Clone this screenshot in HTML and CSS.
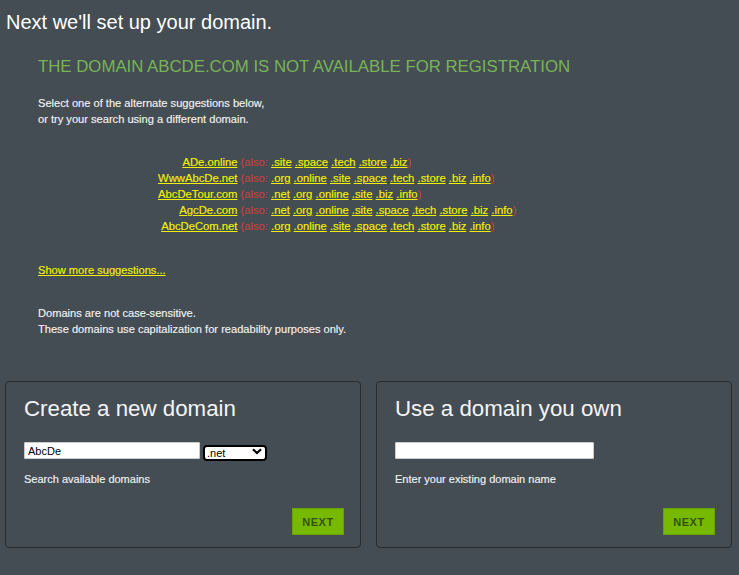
FILE: index.html
```html
<!DOCTYPE html>
<html>
<head>
<meta charset="utf-8">
<link rel="stylesheet" href="styles.css">
</head>
<body>
<h1 class="page-title">Next we'll set up your domain.</h1>
<div class="content">
  <h2 class="notice">THE DOMAIN ABCDE.COM IS NOT AVAILABLE FOR REGISTRATION</h2>
  <p class="info">Select one of the alternate suggestions below,<br>or try your search using a different domain.</p>
  <table class="suggestions">
    <tr><td class="name"><a href="#">ADe.online</a></td><td class="alts"><span class="also">(also:</span> <a href="#">.site</a> <a href="#">.space</a> <a href="#">.tech</a> <a href="#">.store</a> <a href="#">.biz</a><span class="also">)</span></td></tr>
    <tr><td class="name"><a href="#">WwwAbcDe.net</a></td><td class="alts"><span class="also">(also:</span> <a href="#">.org</a> <a href="#">.online</a> <a href="#">.site</a> <a href="#">.space</a> <a href="#">.tech</a> <a href="#">.store</a> <a href="#">.biz</a> <a href="#">.info</a><span class="also">)</span></td></tr>
    <tr><td class="name"><a href="#">AbcDeTour.com</a></td><td class="alts"><span class="also">(also:</span> <a href="#">.net</a> <a href="#">.org</a> <a href="#">.online</a> <a href="#">.site</a> <a href="#">.biz</a> <a href="#">.info</a><span class="also">)</span></td></tr>
    <tr><td class="name"><a href="#">AgcDe.com</a></td><td class="alts"><span class="also">(also:</span> <a href="#">.net</a> <a href="#">.org</a> <a href="#">.online</a> <a href="#">.site</a> <a href="#">.space</a> <a href="#">.tech</a> <a href="#">.store</a> <a href="#">.biz</a> <a href="#">.info</a><span class="also">)</span></td></tr>
    <tr><td class="name"><a href="#">AbcDeCom.net</a></td><td class="alts"><span class="also">(also:</span> <a href="#">.org</a> <a href="#">.online</a> <a href="#">.site</a> <a href="#">.space</a> <a href="#">.tech</a> <a href="#">.store</a> <a href="#">.biz</a> <a href="#">.info</a><span class="also">)</span></td></tr>
  </table>
  <p class="more"><a href="#">Show more suggestions...</a></p>
  <p class="info note">Domains are not case-sensitive.<br>These domains use capitalization for readability purposes only.</p>
</div>
<div class="cards">
  <div class="card">
    <h2 class="card-title">Create a new domain</h2>
    <div class="field-row">
      <input class="text-input short" type="text" value="AbcDe">
      <div class="select-wrap">
        <select class="tld"><option>.net</option></select>
        <svg class="chev" width="10" height="7" viewBox="0 0 10 7"><path d="M1 1.2 L5 5 L9 1.2" fill="none" stroke="#000" stroke-width="2.2"/></svg>
      </div>
    </div>
    <p class="hint">Search available domains</p>
    <div class="actions"><button class="next">NEXT</button></div>
  </div>
  <div class="card">
    <h2 class="card-title">Use a domain you own</h2>
    <div class="field-row">
      <input class="text-input long" type="text" value="">
    </div>
    <p class="hint">Enter your existing domain name</p>
    <div class="actions"><button class="next">NEXT</button></div>
  </div>
</div>
</body>
</html>
```
FILE: styles.css
```css
html, body {
  margin: 0;
  padding: 0;
  background: #444d53;
  font-family: "Liberation Sans", Arial, sans-serif;
  color: #f2f2f2;
}
body {
  width: 739px;
  height: 575px;
  overflow: hidden;
}
.page-title {
  margin: 0;
  padding: 11px 0 0 6px;
  font-size: 20px;
  font-weight: normal;
  line-height: 23px;
  color: #ffffff;
}
.content {
  padding: 0 0 0 38px;
}
.notice {
  margin: 23px 0 0 0;
  font-size: 16.8px;
  font-weight: normal;
  line-height: 19px;
  color: #78b455;
}
.info {
  margin: 19px 0 0 0;
  font-size: 11.1px;
  line-height: 16px;
  color: #f2f2f2;
  -webkit-text-stroke: 0.15px #f2f2f2;
}
.suggestions {
  margin: 27px 0 0 120px;
  border-collapse: collapse;
  font-size: 11.25px;
  line-height: 16px;
}
.suggestions td {
  padding: 0;
  white-space: nowrap;
}
.suggestions .name {
  text-align: right;
  padding-right: 3px;
}
.suggestions a, .more a {
  color: #f2f200;
  text-decoration: underline;
  -webkit-text-stroke: 0.15px #f2f200;
}
.also {
  color: #d83c3c;
}
.more {
  margin: 28px 0 0 0;
  font-size: 11.1px;
  line-height: 16px;
}
.note {
  margin-top: 27px;
}
.cards {
  display: flex;
  gap: 15px;
  padding: 44px 0 0 5px;
}
.card {
  box-sizing: border-box;
  width: 356px;
  height: 167px;
  border: 1px solid #262c30;
  border-radius: 4px;
  padding: 14px 16px 0 18px;
  display: flex;
  flex-direction: column;
}
.card-title {
  margin: 0;
  font-size: 22.3px;
  font-weight: normal;
  line-height: 25px;
  color: #f4f4f4;
}
.field-row {
  display: flex;
  align-items: center;
  gap: 3px;
  margin-top: 21px;
  height: 17px;
}
.text-input {
  box-sizing: border-box;
  height: 17px;
  border: 1px solid #ccc;
  border-radius: 1px;
  background: #fff;
  padding: 0 3px;
  font-family: "Liberation Sans", Arial, sans-serif;
  font-size: 11px;
  color: #000;
  outline: none;
}
.text-input.short { width: 176px; }
.text-input.long { width: 199px; }
.select-wrap {
  position: relative;
  width: 64px;
  height: 16px;
}
.tld {
  appearance: none;
  -webkit-appearance: none;
  box-sizing: border-box;
  width: 64px;
  height: 16px;
  border: 2px solid #000;
  border-radius: 4px;
  background: #fff;
  padding: 0 0 0 2px;
  font-family: "Liberation Sans", Arial, sans-serif;
  font-size: 11px;
  line-height: 12px;
  color: #000;
}
.chev {
  position: absolute;
  right: 5px;
  top: 5px;
}
.hint {
  margin: 13px 0 0 0;
  font-size: 11px;
  line-height: 14px;
  color: #f2f2f2;
  -webkit-text-stroke: 0.15px #f2f2f2;
}
.actions {
  display: flex;
  justify-content: flex-end;
  margin-top: 22px;
}
.next {
  width: 52px;
  height: 27px;
  box-sizing: border-box;
  background: #76b900;
  border: 1px solid #6aa000;
  color: #34520d;
  font-family: "Liberation Sans", Arial, sans-serif;
  font-size: 11px;
  font-weight: bold;
  letter-spacing: 0.5px;
  padding: 0;
  cursor: pointer;
}
```
